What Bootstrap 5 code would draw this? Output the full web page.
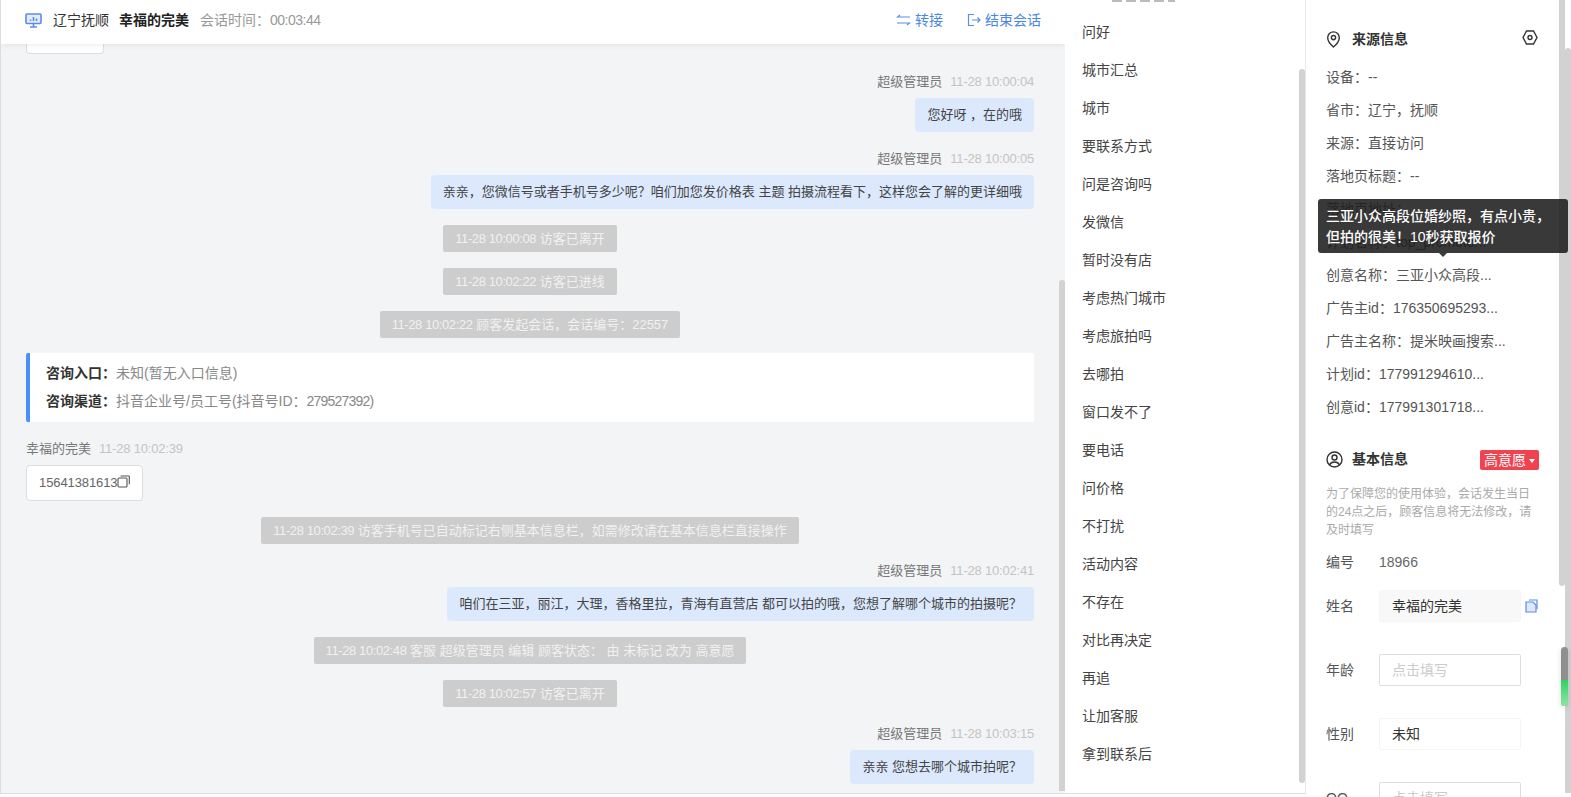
<!DOCTYPE html>
<html lang="zh">
<head>
  <meta charset="UTF-8" />
  <meta name="viewport" content="width=device-width, initial-scale=1" />
  <title>会话</title>
  <link href="https://cdn.jsdelivr.net/npm/bootstrap@5.3.3/dist/css/bootstrap.min.css" rel="stylesheet" />
  <style>
    html, body { height: 797px; overflow: hidden; }
    body {
      background: #fff;
      font-family: "Liberation Sans", "Noto Sans CJK SC", sans-serif;
      font-size: 14px;
      color: #333;
    }
    .page-wrap { width: 1571px; height: 797px; }

    /* chat column */
    .chat-col { width: 1065px; height: 793px; background: #f3f4f6; border-left: 1px solid #ddd; position: relative; overflow: hidden; flex-shrink: 0; }
    .chat-head { height: 44px; background: #fff; box-shadow: 0 1px 6px rgba(0,0,0,.08); padding: 0 24px 4px; position: relative; z-index: 2; flex-shrink: 0; }
    .head-place { color: #333; margin-left: 11px; }
    .head-name { color: #222; font-weight: 700; margin-left: 10px; }
    .head-time { color: #999; margin-left: 11px; }
    .head-clock { letter-spacing: -.5px; }
    .head-link { color: #4a86e8; }
    .chat-body { padding: 0 31px 0 25px; margin-top: -1px; }
    .stub-bubble { width: 78px; height: 11px; background: #fff; border: 1px solid #ddd; border-top: 0; border-radius: 0 0 4px 4px; margin-bottom: 19px; }
    .msg-meta { font-size: 13px; color: #777; line-height: 18px; margin-bottom: 7px; }
    .msg-meta span { color: #c4c4c4; margin-left: 8px; letter-spacing: -.2px; }
    .bubble-out { background: #dce9fd; border-radius: 4px; padding: 0 12px; height: 34px; line-height: 34px; font-size: 13px; color: #444; margin-bottom: 18px; }
    .bubble-before-sys { margin-bottom: 16px; }
    .sys-group { margin-bottom: 18px; }
    .sys-first { margin-bottom: 15px; }
    .sys-line { background: #cdcdcd; color: #f1f1f1; border-radius: 2px; height: 27px; line-height: 27px; padding: 0 12px; font-size: 13px; }
    .stamp { letter-spacing: -.4px; }
    .enter-card { background: #fff; border-left: 4px solid #4a90fa; border-radius: 2px; height: 69px; padding: 6px 16px; font-size: 14px; line-height: 28px; color: #888; margin-bottom: 18px; }
    .enter-card b { color: #333; }
    .id-num { letter-spacing: -.8px; }
    .phone-box { background: #fff; border: 1px solid #ddd; border-radius: 4px; height: 36px; width: 117px; line-height: 34px; padding: 0 12px; font-size: 13px; letter-spacing: -.1px; color: #666; margin-bottom: 16px; }
    .copy-ico { margin-top: -4px; }
    .scroll-a { position: absolute; right: 0; top: 280px; width: 6px; height: 511px; background: #d2d2d2; border-radius: 3px 3px 0 0; }

    /* phrase list */
    .phrase-col { width: 241px; height: 793px; border-right: 1px solid #e8e8e8; position: relative; overflow: hidden; flex-shrink: 0; padding-top: 13px; }
    .phrase-item { height: 38px; line-height: 38px; padding-left: 17px; font-size: 14px; color: #444; }
    .phrase-cut { position: absolute; left: 47px; top: 0; width: 63px; height: 2px; background: repeating-linear-gradient(90deg, #bbb 0 10px, transparent 10px 14px); }
    .scroll-b { position: absolute; right: 0; top: 69px; width: 6px; height: 714px; background: #d2d2d2; border-radius: 3px; }

    /* info column */
    .info-col { width: 253px; height: 797px; overflow: hidden; padding: 0 20px; flex-shrink: 0; }
    .sec-title { font-weight: 700; font-size: 14px; color: #333; }
    .sec-ico { width: 26px; flex-shrink: 0; }
    .gear-ico { margin: -4px 1px 0 0; }
    .info-line { height: 33px; line-height: 33px; color: #555; font-size: 14px; white-space: nowrap; }
    .top-tip { position: absolute; left: 1318px; top: 199px; width: 250px; height: 54px; background: rgba(30,30,30,.88); color: #fff; border-radius: 3px; font-size: 14px; font-weight: 500; line-height: 21px; padding: 7px 8px; z-index: 4; }
    .top-tip::after { content: ""; position: absolute; left: 121px; bottom: -4px; border: 4px solid transparent; border-bottom: 0; border-top-color: #3a3a3a; }
    .level-tag { background: #f0434f; color: #fff; border-radius: 2px; font-size: 14px; height: 20px; line-height: 20px; padding: 0 4px; }
    .level-tag i { display: inline-block; border: 3.5px solid transparent; border-top: 4px solid #fff; border-bottom: 0; margin-left: 3px; vertical-align: 2px; }
    .hint-text { color: #aaa; font-size: 12px; line-height: 18px; margin: 15px 0 13px; }
    .field-row { height: 32px; margin-bottom: 32px; }
    .field-name { width: 53px; color: #555; flex-shrink: 0; }
    .field-val { color: #666; }
    .field-box { width: 142px; height: 32px; line-height: 30px; border: 1px solid #ddd; border-radius: 2px; padding: 0 12px; color: #333; font-size: 14px; }
    .field-box.is-filled { background: #f8f8f8; border-color: #f6f6f6; }
    .field-box.is-plain { border-color: #f5f5f5; }
    .field-box.is-empty { color: #ccc; }

    /* outer scrollbars */
    .bar-inner { position: absolute; left: 1559px; top: 0; width: 6px; height: 586px; background: #d2d2d2; border-radius: 0 0 3px 3px; }
    .bar-outer { position: absolute; left: 1565px; top: 48px; width: 6px; height: 745px; background: #d2d2d2; border-radius: 3px 3px 0 0; }
    .float-bar { position: absolute; left: 1561px; top: 647px; width: 7px; height: 59px; border-radius: 4px; overflow: hidden; background: #8f8f8f; box-shadow: 0 2px 6px rgba(0,0,0,.12); z-index: 3; }
    .float-bar div { height: 26px; margin-top: 33px; background: linear-gradient(#2fd35f, #8fe4a8); }
    .foot-line { position: absolute; left: 0; top: 793px; width: 1306px; border-top: 1px solid #ddd; }
  </style>
</head>
<body>
  <div class="page-wrap d-flex position-relative">
    <div class="chat-col d-flex flex-column">
      <div class="chat-head d-flex align-items-center justify-content-between">
        <div class="d-flex align-items-center">
          <svg width="17" height="15" viewBox="0 0 17 15" fill="none" stroke="#5b8de6" stroke-width="1.6"><rect x="1" y="1" width="15" height="9.5" rx="1" fill="#e4ecfb"/><path d="M5 14h7M8.500 10.500V14"/><path d="M5.500 8V6.500M8.500 8V4M11.500 8V5.500"/></svg>
          <span class="head-place">辽宁抚顺</span>
          <span class="head-name">幸福的完美</span>
          <span class="head-time">会话时间：<span class="head-clock">00:03:44</span></span>
        </div>
        <div class="d-flex align-items-center gap-4 head-link">
          <span class="d-flex align-items-center">
            <svg class="me-1" width="15" height="12" viewBox="0 0 15 12" fill="none" stroke="#5b8de6" stroke-width="1.2"><path d="M14 3H1.500L4 1M1 9h12.500L11 11"/></svg>转接</span>
          <span class="d-flex align-items-center">
            <svg class="me-1" width="14" height="14" viewBox="0 0 14 14" fill="none" stroke="#5b8de6" stroke-width="1.2"><path d="M7 1.500H1.500v11H7M5 7h8M10.500 4.500 13 7l-2.500 2.500"/></svg>结束会话</span>
        </div>
      </div>
      <div class="chat-body">
        <div class="stub-bubble"></div>
        <div class="d-flex flex-column align-items-end">
          <div class="msg-meta">超级管理员<span>11-28 10:00:04</span></div>
          <div class="bubble-out">您好呀 ，在的哦</div>
          <div class="msg-meta">超级管理员<span>11-28 10:00:05</span></div>
          <div class="bubble-out bubble-before-sys">亲亲，您微信号或者手机号多少呢？咱们加您发价格表 主题 拍摄流程看下，这样您会了解的更详细哦</div>
        </div>
        <div class="d-flex flex-column align-items-center gap-3 sys-first">
          <div class="sys-line"><span class="stamp">11-28 10:00:08</span> 访客已离开</div>
          <div class="sys-line"><span class="stamp">11-28 10:02:22</span> 访客已进线</div>
          <div class="sys-line"><span class="stamp">11-28 10:02:22</span> 顾客发起会话，会话编号：22557</div>
        </div>
        <div class="enter-card">
          <div><b>咨询入口：</b>未知(暂无入口信息)</div>
          <div><b>咨询渠道：</b>抖音企业号/员工号(抖音号ID：<span class="id-num">279527392)</span></div>
        </div>
        <div class="msg-meta">幸福的完美<span>11-28 10:02:39</span></div>
        <div class="phone-box d-flex align-items-center">15641381613<svg class="flex-shrink-0 copy-ico" width="13" height="13" viewBox="0 0 13 13" fill="none" stroke="#555" stroke-width="1.1"><rect x="1" y="3" width="9" height="9" rx="1"/><path d="M3.500 1h8a.8.8 0 0 1 .8.8v7.500"/></svg></div>
        <div class="d-flex justify-content-center sys-group"><div class="sys-line"><span class="stamp">11-28 10:02:39</span> 访客手机号已自动标记右侧基本信息栏，如需修改请在基本信息栏直接操作</div></div>
        <div class="d-flex flex-column align-items-end">
          <div class="msg-meta">超级管理员<span>11-28 10:02:41</span></div>
          <div class="bubble-out bubble-before-sys">咱们在三亚，丽江，大理，香格里拉，青海有直营店 都可以拍的哦，您想了解哪个城市的拍摄呢？</div>
        </div>
        <div class="d-flex flex-column align-items-center gap-3 sys-group">
          <div class="sys-line"><span class="stamp">11-28 10:02:48</span> 客服 超级管理员 编辑 顾客状态： 由 未标记 改为 高意愿</div>
          <div class="sys-line"><span class="stamp">11-28 10:02:57</span> 访客已离开</div>
        </div>
        <div class="d-flex flex-column align-items-end">
          <div class="msg-meta">超级管理员<span>11-28 10:03:15</span></div>
          <div class="bubble-out">亲亲 您想去哪个城市拍呢？</div>
        </div>
      </div>
      <div class="scroll-a"></div>
    </div>

    <div class="phrase-col">
      <div class="phrase-cut"></div>
      <div class="phrase-item">问好</div>
      <div class="phrase-item">城市汇总</div>
      <div class="phrase-item">城市</div>
      <div class="phrase-item">要联系方式</div>
      <div class="phrase-item">问是咨询吗</div>
      <div class="phrase-item">发微信</div>
      <div class="phrase-item">暂时没有店</div>
      <div class="phrase-item">考虑热门城市</div>
      <div class="phrase-item">考虑旅拍吗</div>
      <div class="phrase-item">去哪拍</div>
      <div class="phrase-item">窗口发不了</div>
      <div class="phrase-item">要电话</div>
      <div class="phrase-item">问价格</div>
      <div class="phrase-item">不打扰</div>
      <div class="phrase-item">活动内容</div>
      <div class="phrase-item">不存在</div>
      <div class="phrase-item">对比再决定</div>
      <div class="phrase-item">再追</div>
      <div class="phrase-item">让加客服</div>
      <div class="phrase-item">拿到联系后</div>
      <div class="scroll-b"></div>
    </div>

    <div class="info-col">
      <div class="d-flex align-items-center justify-content-between" style="margin-top:29px">
        <div class="d-flex align-items-center">
          <div class="sec-ico"><svg class="d-block" width="15" height="17" viewBox="0 0 15 17" fill="none" stroke="#333" stroke-width="1.4"><path d="M7.500 16s5.800-5 5.800-9.300a5.800 5.800 0 0 0-11.600 0C1.700 11 7.500 16 7.500 16z"/><circle cx="7.500" cy="6.600" r="2.100"/></svg></div>
          <span class="sec-title">来源信息</span>
        </div>
        <svg class="gear-ico" width="16" height="15" viewBox="0 0 16 15" fill="none" stroke="#333" stroke-width="1.4"><path d="M4.500 1h7L15 7.500 11.500 14h-7L1 7.500z"/><circle cx="8" cy="7.500" r="2"/></svg>
      </div>
      <div style="margin-top:11px">
        <div class="info-line">设备：--</div>
        <div class="info-line">省市：辽宁，抚顺</div>
        <div class="info-line">来源：直接访问</div>
        <div class="info-line">落地页标题：--</div>
        <div class="info-line">落地页地址：</div>
        <div class="info-line">计划名称：top_promoto...</div>
        <div class="info-line">创意名称：三亚小众高段...</div>
        <div class="info-line">广告主id：176350695293...</div>
        <div class="info-line">广告主名称：提米映画搜索...</div>
        <div class="info-line">计划id：177991294610...</div>
        <div class="info-line">创意id：177991301718...</div>
      </div>
      <div class="d-flex align-items-center justify-content-between" style="margin-top:25px">
        <div class="d-flex align-items-center">
          <div class="sec-ico"><svg class="d-block" width="17" height="17" viewBox="0 0 17 17" fill="none" stroke="#333" stroke-width="1.4"><circle cx="8.500" cy="8.500" r="7.500"/><circle cx="8.500" cy="6.500" r="2.500"/><path d="M3.500 14c1-2.500 3-3 5-3s4 .5 5 3"/></svg></div>
          <span class="sec-title">基本信息</span>
        </div>
        <div class="level-tag">高意愿<i></i></div>
      </div>
      <div class="hint-text">为了保障您的使用体验，会话发生当日的24点之后，顾客信息将无法修改，请及时填写</div>
      <div class="d-flex align-items-center" style="height:20px;margin-bottom:18px"><span class="field-name">编号</span><span class="field-val">18966</span></div>
      <div class="field-row d-flex align-items-center"><span class="field-name">姓名</span><div class="field-box is-filled">幸福的完美</div>
        <svg class="ms-1 flex-shrink-0" width="13" height="14" viewBox="0 0 13 14" fill="#dfe8fb" stroke="#5b8de6" stroke-width="1.2"><path d="M1 3h7l3 3v7H1z"/><path d="M4 1h8v9" fill="none"/></svg></div>
      <div class="field-row d-flex align-items-center"><span class="field-name">年龄</span><div class="field-box is-empty">点击填写</div></div>
      <div class="field-row d-flex align-items-center"><span class="field-name">性别</span><div class="field-box is-plain">未知</div></div>
      <div class="field-row d-flex align-items-center"><span class="field-name">QQ</span><div class="field-box is-empty">点击填写</div></div>
    </div>
    <div class="top-tip">三亚小众高段位婚纱照，有点小贵，<br />但拍的很美！10秒获取报价</div>
    <div class="bar-inner"></div>
    <div class="bar-outer"></div>
    <div class="float-bar"><div></div></div>
    <div class="foot-line"></div>
  </div>
  <script src="https://cdn.jsdelivr.net/npm/bootstrap@5.3.3/dist/js/bootstrap.bundle.min.js"></script>
</body>
</html>
